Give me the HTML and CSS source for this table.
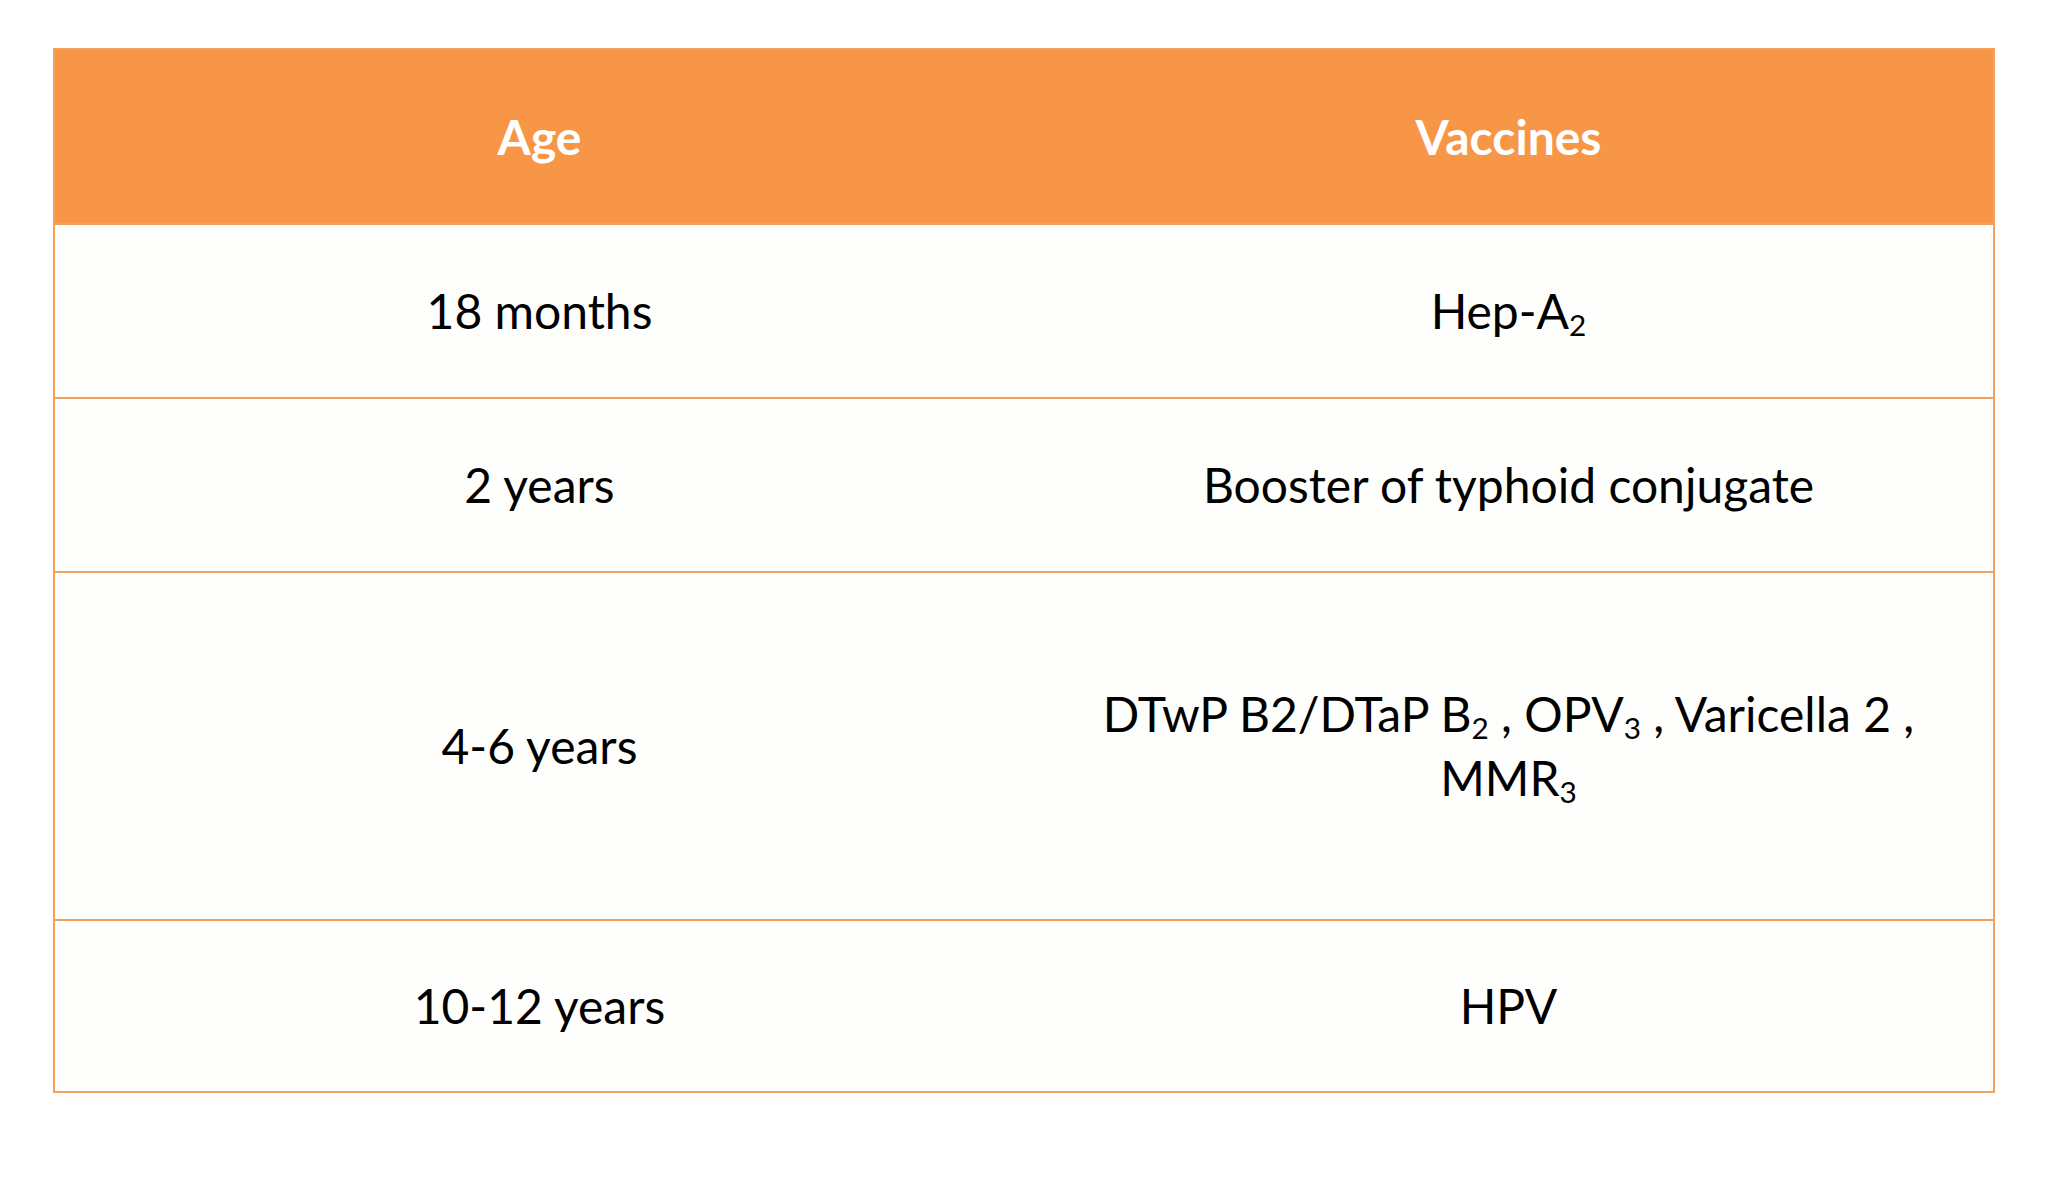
FILE: index.html
```html
<!DOCTYPE html>
<html lang="en">
<head>
<meta charset="utf-8">
<title>Vaccination schedule</title>
<link rel="stylesheet" href="styles.css">
</head>
<body>
<div class="table">
  <div class="row head">
    <div class="cell"><span>Age</span></div>
    <div class="cell"><span>Vaccines</span></div>
  </div>
  <div class="row">
    <div class="cell"><span>18 months</span></div>
    <div class="cell"><span>Hep-A<sub>2</sub></span></div>
  </div>
  <div class="row">
    <div class="cell"><span>2 years</span></div>
    <div class="cell"><span>Booster of typhoid conjugate</span></div>
  </div>
  <div class="row tall">
    <div class="cell"><span>4-6 years</span></div>
    <div class="cell"><span>DTwP B2/DTaP B<sub>2</sub> , OPV<sub>3</sub> , Varicella 2 ,<br>MMR<sub>3</sub></span></div>
  </div>
  <div class="row last">
    <div class="cell"><span>10-12 years</span></div>
    <div class="cell"><span>HPV</span></div>
  </div>
</div>
</body>
</html>
```

FILE: styles.css
```css
html, body {
  margin: 0;
  padding: 0;
  background: #ffffff;
}

body {
  padding: 48px 53px;
  font-family: Lato, "Open Sans", sans-serif;
  color: #000000;
}

.table {
  width: 1942px;
  box-sizing: border-box;
  border: 2px solid #f2a25e;
  background: #fefefd;
}

.row {
  display: grid;
  grid-template-columns: 1fr 1fr;
  box-sizing: border-box;
  height: 174px;
  border-top: 2px solid #f2a25e;
}

.row.head {
  height: 173px;
  border-top: none;
  background: #f79646;
  color: #ffffff;
  font-weight: 700;
}

.row.tall {
  height: 348px;
}

.row.last {
  height: 172px;
}

.cell {
  display: flex;
  align-items: center;
  justify-content: center;
  text-align: center;
  font-size: 48px;
  line-height: 64px;
}

sub {
  font-size: 0.62em;
  line-height: 0;
  vertical-align: -0.22em;
}
```
